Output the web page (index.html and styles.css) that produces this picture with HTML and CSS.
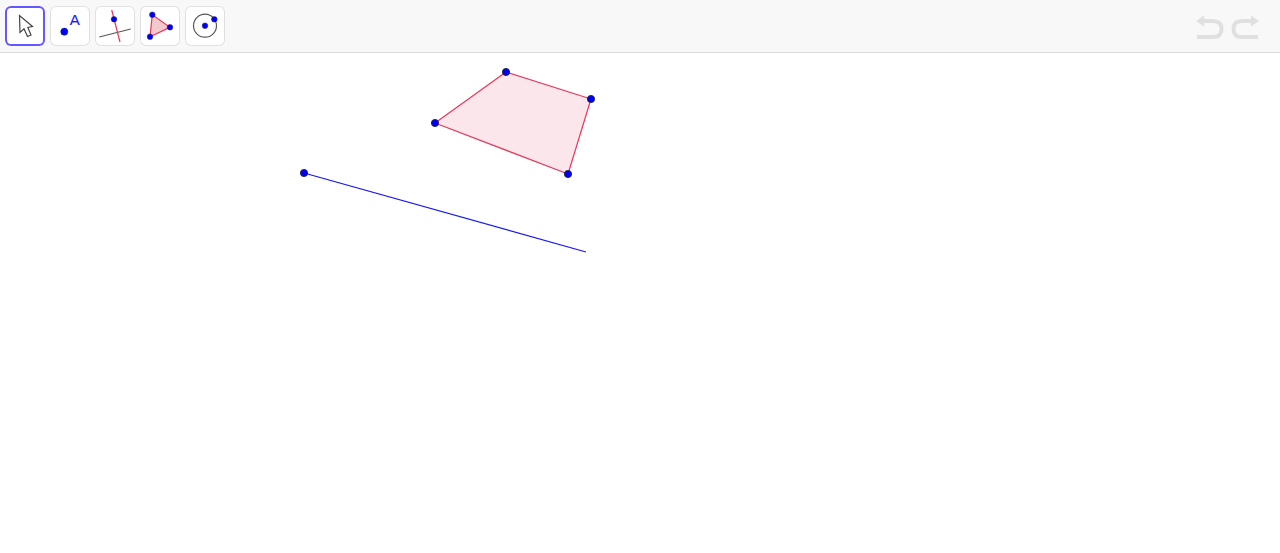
FILE: index.html
```html
<!DOCTYPE html>
<html lang="en">
<head>
<meta charset="utf-8">
<title>Geometry</title>
<link rel="stylesheet" href="styles.css">
</head>
<body>
<header class="toolbar">
  <div class="tools">
    <button class="tool tool-active" aria-label="Move">
      <svg class="icon" viewBox="0 0 40 40"><path class="cursor" d="M14.5 9.5 15 26.5 19 22.7 22.5 30.5 26 29 22.8 21.5 27.5 20.5Z"/></svg>
    </button>
    <button class="tool" aria-label="Point">
      <svg class="icon" viewBox="0 0 40 40"><circle class="pt-icon" cx="14.3" cy="25.7" r="3.6"/><text class="label" x="19.8" y="19.2">A</text></svg>
    </button>
    <button class="tool" aria-label="Line">
      <svg class="icon" viewBox="0 0 40 40"><path class="ln-dark" d="M4.3 31 35.7 23"/><path class="ln-red" d="M16.7 4 25 36"/><circle class="pt-icon" cx="19" cy="13.3" r="2.8"/></svg>
    </button>
    <button class="tool" aria-label="Polygon">
      <svg class="icon" viewBox="0 0 40 40"><path class="tri" d="M12.3 8.7 30 21.3 10 30.7Z"/><circle class="pt-icon" cx="12.3" cy="8.7" r="2.8"/><circle class="pt-icon" cx="30" cy="21.3" r="2.8"/><circle class="pt-icon" cx="10" cy="30.7" r="2.8"/></svg>
    </button>
    <button class="tool" aria-label="Circle">
      <svg class="icon" viewBox="0 0 40 40"><circle class="ring" cx="20" cy="19.7" r="11.5"/><circle class="pt-icon" cx="20" cy="19.7" r="2.8"/><circle class="pt-icon" cx="29.3" cy="13.3" r="2.8"/></svg>
    </button>
  </div>
  <div class="history">
    <svg class="hist" viewBox="0 0 30 26"><path class="hist-line" d="M5 8H18Q26.5 8 26.5 16T18 24H2"/><path class="hist-head" d="M1 8 9 2.500V13.500Z"/></svg>
    <svg class="hist" viewBox="0 0 30 26"><path class="hist-line" d="M25 8H12Q3.500 8 3.500 16T12 24H28"/><path class="hist-head" d="M29 8 21 2.500V13.500Z"/></svg>
  </div>
</header>
<main class="canvas">
  <svg class="drawing" viewBox="0 53 1280 500">
    <polygon class="quad" points="506,72 591,99 568,174 435,123"/>
    <line class="segment" x1="304" y1="173" x2="586" y2="252"/>
    <circle class="pt" cx="506" cy="72" r="3.6"/>
    <circle class="pt" cx="591" cy="99" r="3.6"/>
    <circle class="pt" cx="568" cy="174" r="3.6"/>
    <circle class="pt" cx="435" cy="123" r="3.6"/>
    <circle class="pt" cx="304" cy="173" r="3.6"/>
  </svg>
</main>
</body>
</html>
```

FILE: styles.css
```css
html, body {
  margin: 0;
  height: 100%;
  background: #fff;
  overflow: hidden;
}

.toolbar {
  display: flex;
  justify-content: space-between;
  align-items: flex-start;
  box-sizing: border-box;
  height: 53px;
  padding: 6px 0 0 5px;
  background: #f8f8f8;
  border-bottom: 1px solid #dcdcdc;
}

.tools {
  display: flex;
  gap: 5px;
}

.tool {
  width: 40px;
  height: 40px;
  padding: 0;
  border: 0;
  border-radius: 6px;
  background: #fff;
  box-shadow: inset 0 0 0 1px #e0e0e0;
}

.tool-active {
  box-shadow: inset 0 0 0 2px #6557ff;
}

.icon {
  display: block;
  width: 40px;
  height: 40px;
}

.cursor {
  fill: #fff;
  stroke: #444;
  stroke-width: 1.2;
  stroke-linejoin: miter;
}

.pt-icon {
  fill: #0000ff;
  stroke: #22225a;
  stroke-width: 0.5;
}

.label {
  font-family: "Liberation Sans", Arial, sans-serif;
  font-size: 15px;
  fill: #1a1aff;
  stroke: #1a1aff;
  stroke-width: 0.15;
}

.ln-dark {
  stroke: #555;
  stroke-width: 1.2;
  fill: none;
}

.ln-red {
  stroke: #e8385a;
  stroke-width: 1.2;
  fill: none;
}

.tri {
  fill: #f2c9cc;
  stroke: #e8385a;
  stroke-width: 1.2;
}

.ring {
  fill: none;
  stroke: #555;
  stroke-width: 1.2;
}

.history {
  display: flex;
  gap: 5px;
  padding: 7px 20px 0 0;
}

.hist {
  display: block;
  width: 30px;
  height: 26px;
}

.hist-line {
  fill: none;
  stroke: #e0e0e0;
  stroke-width: 4;
}

.hist-head {
  fill: #e0e0e0;
}

.canvas {
  height: 500px;
}

.drawing {
  display: block;
  width: 1280px;
  height: 500px;
}

.quad {
  fill: #fbe7eb;
  stroke: #e8385a;
  stroke-width: 1.2;
  stroke-linejoin: round;
}

.segment {
  stroke: #1414ff;
  stroke-width: 1.2;
}

.pt {
  fill: #0000ff;
  stroke: #223;
  stroke-width: 0.9;
}
```
